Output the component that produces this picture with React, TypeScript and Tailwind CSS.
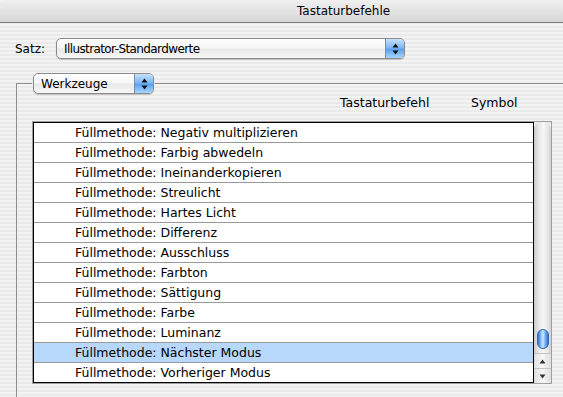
import React from "react";

const rows = [
  "Füllmethode: Negativ multiplizieren",
  "Füllmethode: Farbig abwedeln",
  "Füllmethode: Ineinanderkopieren",
  "Füllmethode: Streulicht",
  "Füllmethode: Hartes Licht",
  "Füllmethode: Differenz",
  "Füllmethode: Ausschluss",
  "Füllmethode: Farbton",
  "Füllmethode: Sättigung",
  "Füllmethode: Farbe",
  "Füllmethode: Luminanz",
  "Füllmethode: Nächster Modus",
  "Füllmethode: Vorheriger Modus",
];

function Arrows() {
  return (
    <svg width="7" height="12" viewBox="0 0 7 12">
      <path d="M3.5 0.5 L6.5 4.5 L0.5 4.5 Z" fill="#111" />
      <path d="M3.5 11.5 L6.5 7.5 L0.5 7.5 Z" fill="#111" />
    </svg>
  );
}

function Popup({ label, width, tight }: { label: string; width: string; tight?: boolean }) {
  return (
    <div
      className={`${width} h-[21px] flex rounded-[5px] border border-[#8c8c8c] bg-[linear-gradient(180deg,#ffffff_0%,#f6f6f6_45%,#e9e9e9_55%,#f7f7f7_100%)] shadow-[0_1px_1px_rgba(0,0,0,0.18)] overflow-hidden`}
    >
      <div
        className={`flex-1 flex items-center pl-[7px] text-[12px] text-black leading-none ${
          tight ? "tracking-[-0.6px]" : ""
        }`}
      >
        {label}
      </div>
      <div className="w-[19px] flex items-center justify-center border-l border-[#6f8fb8] bg-[linear-gradient(180deg,#c6e2fb_0%,#7fb8f2_45%,#5aa2ee_55%,#a7d6fd_100%)]">
        <Arrows />
      </div>
    </div>
  );
}

export default function App() {
  return (
    <div
      className="w-[563px] h-[397px] overflow-hidden bg-[repeating-linear-gradient(180deg,#f3f3f3_0px,#f3f3f3_2px,#eaeaea_2px,#eaeaea_4px)] text-black"
      style={{ fontFamily: '"DejaVu Sans", "Liberation Sans", sans-serif' }}
    >
      {/* Title bar */}
      <div className="h-[23px] flex items-center pl-[297px] text-[12px] rounded-tl-[6px] border-b border-[#7d7d7d] bg-[linear-gradient(180deg,#efefef_0%,#e4e4e4_50%,#d6d6d6_100%)]">
        Tastaturbefehle
      </div>

      {/* Satz row */}
      <div className="flex items-center mt-[15px] pl-[15px]">
        <span className="text-[12px] w-[41px]">Satz:</span>
        <Popup label="Illustrator-Standardwerte" width="w-[349px]" tight />
      </div>

      {/* Group box */}
      <fieldset className="mt-[14px] ml-[16px] border-l border-t border-[#8f8f8f] pl-[15px] h-[400px]">
        <legend className="px-[1px]">
          <Popup label="Werkzeuge" width="w-[121px]" />
        </legend>
        <div className="h-[16px] flex items-center text-[12.5px] mt-[1px]">
          <span className="pl-[308px] w-[439px]">Tastaturbefehl</span>
          <span>Symbol</span>
        </div>
        <div className="mt-[10px] flex w-[520px] border border-[#9f9f9f]">
          <div className="w-[501px] border border-black bg-white">
            {rows.map((r, i) => (
              <div
                key={r}
                className={`${i === rows.length - 1 ? "h-[19px]" : "h-[20px] border-b border-[#9a9a9a]"} ${
                  i === 11 ? "bg-[#b7d7fb]" : "bg-white"
                } flex items-center pl-[41px] pt-[1px] text-[12.5px] leading-none`}
              >
                {r}
              </div>
            ))}
          </div>
          {/* Scrollbar */}
          <div className="w-[17px] flex flex-col">
            <div className="flex-1 rounded-t-[8px] bg-[linear-gradient(90deg,#c9c9c9_0%,#e6e6e6_25%,#f7f7f7_55%,#e4e4e4_85%,#cdcdcd_100%)] flex flex-col justify-end items-center pb-[4px]">
              <div className="w-[12px] h-[20px] rounded-full border border-[#2f66b8] bg-[linear-gradient(90deg,#2e6fd1_0%,#8cc2f6_30%,#cfe8ff_50%,#7ab6f3_70%,#2f70cf_100%)]" />
            </div>
            <div className="h-[15px] flex items-center justify-center border-t border-[#c4c4c4] bg-[linear-gradient(90deg,#dedede_0%,#f6f6f6_50%,#dedede_100%)]">
              <svg width="7" height="5" viewBox="0 0 7 5">
                <path d="M3.5 0.5 L6.5 4.5 L0.5 4.5 Z" fill="#333" />
              </svg>
            </div>
            <div className="h-[15px] flex items-center justify-center border-t border-[#c4c4c4] bg-[linear-gradient(90deg,#dedede_0%,#f6f6f6_50%,#dedede_100%)]">
              <svg width="7" height="5" viewBox="0 0 7 5">
                <path d="M3.5 4.5 L6.5 0.5 L0.5 0.5 Z" fill="#333" />
              </svg>
            </div>
          </div>
        </div>
      </fieldset>
    </div>
  );
}
